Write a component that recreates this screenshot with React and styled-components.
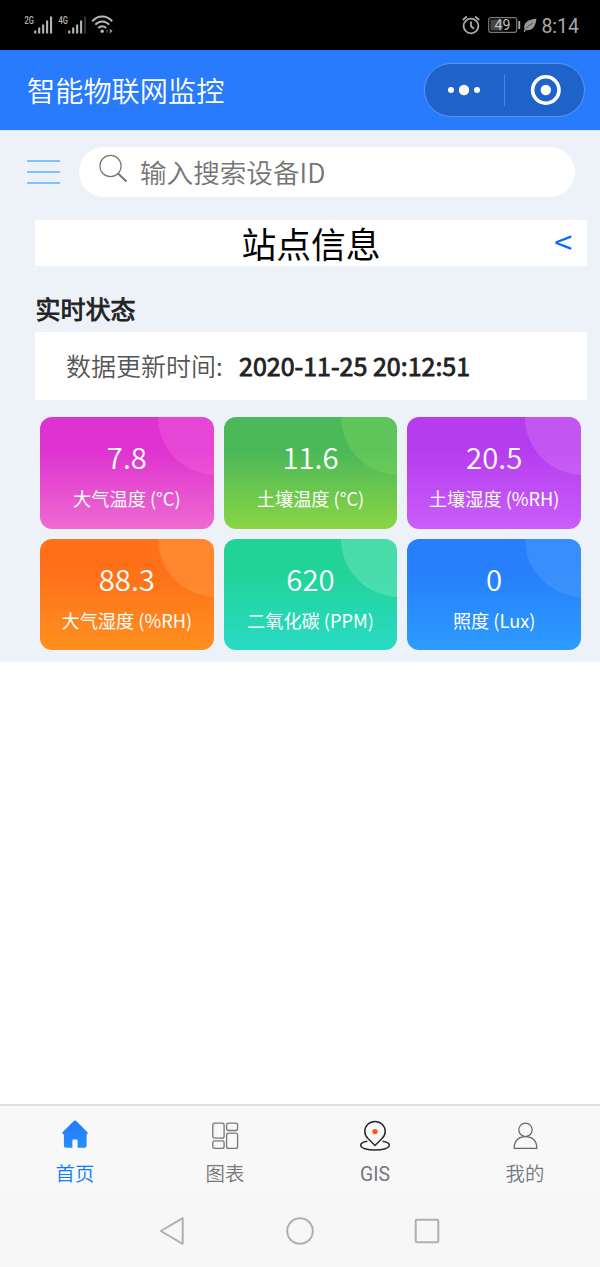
import React, { useState } from 'react'
import styled, { createGlobalStyle } from 'styled-components'

const GlobalStyle = createGlobalStyle`
  * {
    box-sizing: border-box;
  }
  body {
    margin: 0;
    background: #fff;
    font-family: 'Noto Sans CJK SC', 'Noto Sans', sans-serif;
  }
  svg {
    display: block;
    flex: none;
    overflow: visible;
  }
`;

const Screen = styled.div`
  width: 600px;
  height: 1267px;
  display: flex;
  flex-direction: column;
  overflow: hidden;
`;

const StatusBar = styled.div`
  height: 50px;
  flex: none;
  display: flex;
  justify-content: space-between;
  padding: 0 21px 0 24px;
  background: #000;
  color: #a9a9a9;
  font-family: Roboto, sans-serif;
`;

const StatusGroup = styled.div`
  display: flex;
  align-items: center;
`;

const Gap = styled.div`
  width: ${props => props.$size}px;
`;

const Clock = styled.span`
  font-size: 19.5px;
  line-height: 24px;
  margin-left: 4px;
  padding-top: 3px;
`;

const Header = styled.header`
  height: 80px;
  flex: none;
  display: flex;
  align-items: center;
  justify-content: space-between;
  padding: 0 15px 0 27px;
  background: #277bfc;
  color: #fff;
`;

const Title = styled.h1`
  margin: 0;
  font-size: 28.2px;
  line-height: 40px;
  font-weight: 350;
`;

const Capsule = styled.div`
  width: 161px;
  height: 54px;
  display: flex;
  align-items: center;
  border: 1px solid #5c98ea;
  border-radius: 27px;
  background: #1f63ca;
`;

const CapsuleButton = styled.div`
  flex: 1;
  display: flex;
  align-items: center;
  justify-content: center;
`;

const CapsuleLine = styled.div`
  width: 1px;
  height: 32px;
  background: #4f85d8;
`;

const Content = styled.main`
  height: 532px;
  flex: none;
  background: #edf2f9;
  border-top: 1px solid #d3e3fb;
`;

const SearchRow = styled.div`
  display: flex;
  align-items: center;
  padding: 16px 25px 0 27px;
`;

const MenuButton = styled.div`
  width: 33px;
  height: 24px;
  margin-right: 19px;
  display: flex;
  flex-direction: column;
  justify-content: space-between;
  div {
    height: 2px;
    background: #80c2fc;
  }
`;

const SearchBox = styled.div`
  flex: 1;
  height: 50px;
  display: flex;
  align-items: center;
  padding: 0 0 3px 20px;
  border-radius: 25px;
  background: #fff;
  color: #757575;
  font-size: 26.6px;
  line-height: 40px;
  font-weight: 350;
  span {
    margin-left: 12px;
    padding-top: 2px;
  }
`;

const StationBar = styled.div`
  display: flex;
  align-items: center;
  height: 46px;
  margin: 23px 13px 0 35px;
  background: #fff;
`;

const StationName = styled.div`
  flex: 1;
  padding-left: 33px;
  text-align: center;
  color: #000;
  font-size: 34.8px;
  line-height: 46px;
`;

const Arrow = styled.div`
  width: 33px;
  color: #0a6cff;
  font-size: 33px;
  line-height: 42px;
  padding-bottom: 4px;
`;

const SectionTitle = styled.h2`
  margin: 24px 0 0 35.5px;
  font-size: 25px;
  line-height: 36px;
  font-weight: 400;
  color: #222;
  -webkit-text-stroke: 0.8px #222;
`;

const UpdateBar = styled.div`
  display: flex;
  align-items: center;
  height: 68px;
  margin: 6px 13px 0 35px;
  padding: 0 0 2px 31px;
  background: #fff;
  font-size: 25px;
  line-height: 36px;
`;

const UpdateLabel = styled.span`
  width: 173px;
  color: #555;
  font-weight: 350;
`;

const UpdateTime = styled.span`
  color: #222;
  -webkit-text-stroke: 0.8px #222;
`;

const Cards = styled.div`
  display: grid;
  grid-template-columns: repeat(3, 1fr);
  grid-auto-rows: 111.5px;
  gap: 10px;
  padding: 17px 19px 0 40px;
`;

const Card = styled.div`
  position: relative;
  overflow: hidden;
  border-radius: 12px;
  background: linear-gradient(180deg, ${props => props.$from} 0%, ${props => props.$from} 30%, ${props => props.$to} 100%);
  color: #fff;
  text-align: center;
  &::after {
    content: '';
    position: absolute;
    top: -58px;
    right: -60px;
    width: 116px;
    height: 116px;
    border-radius: 50%;
    background: ${props => props.$shine};
  }
`;

const CardValue = styled.div`
  margin-top: 18px;
  font-size: 29.3px;
  line-height: 42px;
  font-weight: 350;
`;

const CardLabel = styled.div`
  margin-top: 7px;
  font-size: 18.2px;
  line-height: 28px;
`;

const Blank = styled.div`
  flex: 1;
  background: #fff;
`;

const TabBar = styled.nav`
  height: 91px;
  flex: none;
  display: flex;
  background: #f8f8f8;
  border-top: 2px solid #e1e1e1;
`;

const Tab = styled.div`
  flex: 1;
  display: flex;
  flex-direction: column;
  align-items: center;
  padding-top: 13px;
  color: ${props => props.$active ? '#107bfc' : '#75787c'};
  font-family: ${props => props.$latin ? 'Roboto, sans-serif' : 'inherit'};
  font-size: 19.4px;
  line-height: 28px;
  font-weight: ${props => props.$latin ? 400 : 350};
  cursor: pointer;
  span {
    margin-top: ${props => props.$latin ? '10px' : '8px'};
  }
`;

const SystemNav = styled.div`
  height: 72px;
  flex: none;
  display: flex;
  align-items: center;
  justify-content: center;
  gap: 98px;
  background: #f7f7f7;
`;

const signalBars = [3, 6, 9, 13, 17]

const Signal = ({ label, dim }) => (
  <svg width="30" height="22" viewBox="0 0 30 22">
    <text x="0.5" y="10" fontSize="10.5" fontWeight="500" fill="#b5b5b5" textLength="9.5" lengthAdjust="spacingAndGlyphs">{label}</text>
    {signalBars.map((h, i) => (
      <rect key={h} x={10.2 + i * 3.95} y={19.5 - h} width="2.1" height={h} fill={dim && i === 4 ? '#333' : '#b5b5b5'} />
    ))}
  </svg>
)

const Wifi = () => (
  <svg width="23" height="20" viewBox="0 0 23 20" fill="none" stroke="#b5b5b5" strokeWidth="2">
    <path d="M1.3 6.2C7 0 15.5 0 21.2 6.2" />
    <path d="M4.3 9.6c4-4.3 9.9-4.3 13.9 0" />
    <path d="M7.3 13c2.3-2.5 5.6-2.5 7.9 0" />
    <circle cx="11.2" cy="16.2" r="1.7" fill="#b5b5b5" stroke="none" />
    <path d="M16.8 14v4l-2.2-2z" fill="#444" stroke="none" />
    <path d="M18.8 13.5v5l2.7-2.5z" fill="#999" stroke="none" />
  </svg>
)

const Alarm = () => (
  <svg width="18" height="20" viewBox="0 0 18 20" fill="none" stroke="#a9a9a9" strokeWidth="1.8">
    <circle cx="9" cy="11" r="7.4" />
    <path d="M9 6.5v4.8l3 2.5M0.8 5l4-3.5M17.2 5l-4-3.5" />
  </svg>
)

const Battery = () => (
  <svg width="34" height="18" viewBox="0 0 34 18">
    <rect x="0.7" y="1.7" width="28" height="14.6" rx="2" fill="none" stroke="#777" strokeWidth="1.2" />
    <rect x="2.5" y="3.5" width="12" height="11" fill="#454545" />
    <rect x="30.3" y="5" width="1.9" height="8" fill="#a9a9a9" />
    <text x="6.6" y="14" fontSize="14" fill="#c0c0c0">49</text>
  </svg>
)

const Leaf = () => (
  <svg width="14" height="15" viewBox="0 0 14 15">
    <path d="M13.5 0.8C12.5 8.5 9.5 13.2 2.8 12.2L1.3 14.2L0.5 13.5L1.5 11.5C-0.3 4.5 5.5 1.5 13.5 0.8Z" fill="#999" />
    <path d="M3 10.5C5 8 7.5 6.3 10 5" stroke="#222" strokeWidth="0.6" fill="none" />
  </svg>
)

const HomeIcon = () => (
  <svg width="32" height="32" viewBox="0 0 32 32">
    <defs>
      <linearGradient id="home" x1="0" y1="0" x2="0" y2="1">
        <stop offset="0" stopColor="#237afa" />
        <stop offset="1" stopColor="#2b8dfd" />
      </linearGradient>
    </defs>
    <path d="M14.6 2.2Q16 0.8 17.4 2.2L28.2 13.1Q29.5 15 27.6 15.5V26.8Q27.6 28.8 25.8 28.8H18.6V21.5Q18.6 20.5 17.6 20.5H14.4Q13.4 20.5 13.4 21.5V28.8H6.700Q4.900 28.8 4.900 26.8V15.5Q2.500 15 3.800 13.1Z" fill="url(#home)" />
  </svg>
)

const ChartIcon = () => (
  <svg width="32" height="32" viewBox="0 0 32 32" fill="none" stroke="#777" strokeWidth="1.3">
    <rect x="3.8" y="4.2" width="11.3" height="15" rx="2" />
    <rect x="17.6" y="4.2" width="11" height="7.3" rx="2" />
    <rect x="3.8" y="21.8" width="11.3" height="7.6" rx="2" />
    <rect x="17.6" y="14.2" width="11" height="15.2" rx="2" />
  </svg>
)

const GisIcon = () => (
  <svg width="32" height="32" viewBox="0 0 32 32" fill="none" stroke="#2b282b" strokeWidth="1.5">
    <path d="M16 26.5L9.2 19.8C7.2 17.700 5.8 15.2 5.8 12.4A10.2 10 0 0 1 26.2 12.4C26.2 15.2 24.8 17.700 22.8 19.8Z" />
    <path d="M8.3 22.3C4 23 1.7 24.5 1.7 26.2C1.7 29 8 31.1 16 31.1S30.3 29 30.3 26.2C30.3 24.5 28 23 23.7 22.3" />
    <circle cx="16" cy="12.600" r="2.7" fill="#fc5a1a" stroke="none" />
  </svg>
)

const MineIcon = () => (
  <svg width="32" height="32" viewBox="0 0 32 32" fill="none" stroke="#666" strokeWidth="1.2">
    <circle cx="16.5" cy="10.8" r="6.7" />
    <path d="M5.2 29.4C5 22 9.5 17.6 16.5 17.6S28 22 27.8 29.4Z" />
  </svg>
)

const cards = [
  { value: '7.8', label: '大气温度 (°C)', from: '#de33d0', to: '#ee6bd0', shine: 'rgba(255, 120, 225, 0.28)' },
  { value: '11.6', label: '土壤温度 (°C)', from: '#4bb859', to: '#8ad544', shine: 'rgba(125, 215, 95, 0.42)' },
  { value: '20.5', label: '土壤湿度 (%RH)', from: '#b63dee', to: '#c95efb', shine: 'rgba(225, 140, 255, 0.32)' },
  { value: '88.3', label: '大气湿度 (%RH)', from: '#ff7019', to: '#ff901f', shine: 'rgba(255, 165, 80, 0.4)' },
  { value: '620', label: '二氧化碳 (PPM)', from: '#22d398', to: '#29dac5', shine: 'rgba(130, 235, 200, 0.4)' },
  { value: '0', label: '照度 (Lux)', from: '#277ffc', to: '#2c9cfe', shine: 'rgba(95, 175, 255, 0.32)' },
]

const tabs = [
  { name: '首页', icon: <HomeIcon /> },
  { name: '图表', icon: <ChartIcon /> },
  { name: 'GIS', icon: <GisIcon />, latin: true },
  { name: '我的', icon: <MineIcon /> },
]

const App = () => {

  const [active, setActive] = useState(0)

  return (
    <Screen>
      <GlobalStyle />
      <StatusBar>
        <StatusGroup>
          <Signal label="2G" />
          <Gap $size={4} />
          <Signal label="4G" dim />
          <Gap $size={3} />
          <Wifi />
        </StatusGroup>
        <StatusGroup>
          <Alarm />
          <Gap $size={8} />
          <Battery />
          <Gap $size={1} />
          <Leaf />
          <Clock>8:14</Clock>
        </StatusGroup>
      </StatusBar>
      <Header>
        <Title>智能物联网监控</Title>
        <Capsule>
          <CapsuleButton>
            <svg width="36" height="14" viewBox="0 0 36 14" fill="#fff">
              <circle cx="4" cy="7" r="3" />
              <circle cx="17" cy="7" r="5.2" />
              <circle cx="30" cy="7" r="3" />
            </svg>
          </CapsuleButton>
          <CapsuleLine />
          <CapsuleButton>
            <svg width="30" height="30" viewBox="0 0 30 30">
              <circle cx="15.8" cy="15" r="13.2" fill="none" stroke="#fff" strokeWidth="3.6" />
              <circle cx="15.8" cy="15" r="5.2" fill="#fff" />
            </svg>
          </CapsuleButton>
        </Capsule>
      </Header>
      <Content>
        <SearchRow>
          <MenuButton>
            <div></div>
            <div></div>
            <div></div>
          </MenuButton>
          <SearchBox>
            <svg width="29" height="34" viewBox="0 0 29 34" fill="none" stroke="#777">
              <circle cx="11.5" cy="12" r="10.6" strokeWidth="1.2" />
              <path d="M19 19.5l8.5 8" strokeWidth="2.2" />
            </svg>
            <span>输入搜索设备ID</span>
          </SearchBox>
        </SearchRow>
        <StationBar>
          <StationName>站点信息</StationName>
          <Arrow>&lt;</Arrow>
        </StationBar>
        <SectionTitle>实时状态</SectionTitle>
        <UpdateBar>
          <UpdateLabel>数据更新时间:</UpdateLabel>
          <UpdateTime>2020-11-25 20:12:51</UpdateTime>
        </UpdateBar>
        <Cards>
          {cards.map(card => (
            <Card key={card.label} $from={card.from} $to={card.to} $shine={card.shine}>
              <CardValue>{card.value}</CardValue>
              <CardLabel>{card.label}</CardLabel>
            </Card>
          ))}
        </Cards>
      </Content>
      <Blank />
      <TabBar>
        {tabs.map((tab, i) => (
          <Tab key={tab.name} $active={i === active} $latin={tab.latin} onClick={() => setActive(i)}>
            {tab.icon}
            <span>{tab.name}</span>
          </Tab>
        ))}
      </TabBar>
      {/* Android buttons */}
      <SystemNav>
        <svg width="28" height="30" viewBox="0 0 28 30" fill="none" stroke="#b0b0b0" strokeWidth="2" strokeLinejoin="round">
          <path d="M23.7 2.2V27.8L1.8 15Z" />
        </svg>
        <svg width="30" height="30" viewBox="0 0 30 30" fill="none" stroke="#b0b0b0" strokeWidth="2">
          <circle cx="15" cy="15" r="12.8" />
        </svg>
        <svg width="28" height="30" viewBox="0 0 28 30" fill="none" stroke="#b0b0b0" strokeWidth="2">
          <rect x="2.7" y="3.7" width="22.6" height="22.6" rx="1" />
        </svg>
      </SystemNav>
    </Screen>
  )
}

export default App
